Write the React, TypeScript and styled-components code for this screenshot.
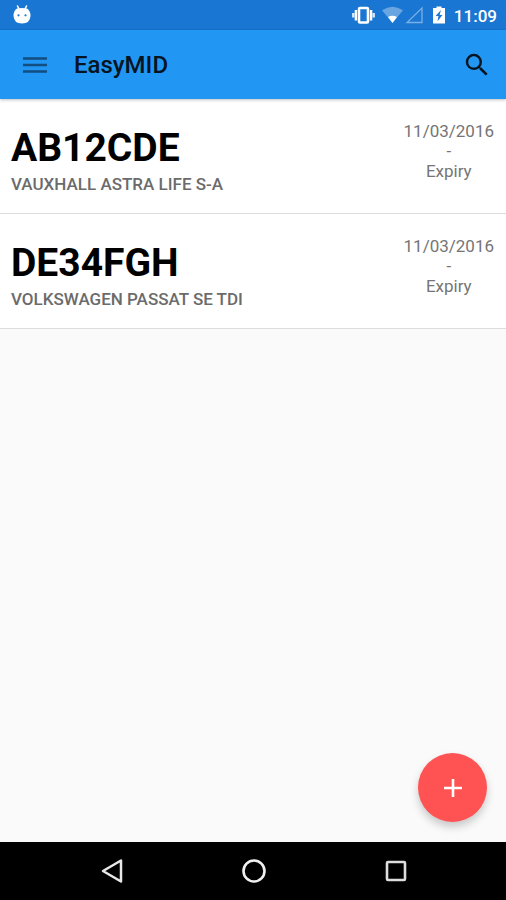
import React from "react";
import styled, { createGlobalStyle } from "styled-components";

const GlobalStyle = createGlobalStyle`
  *, *::before, *::after { box-sizing: border-box; }
  body { margin: 0; background: #fafafa; font-family: Roboto, sans-serif; }
  svg { display: block; }
`;

const Screen = styled.div`
  display: flex;
  flex-direction: column;
  min-height: 100vh;
  background: #fafafa;
`;

const StatusBar = styled.div`
  display: flex;
  align-items: center;
  justify-content: space-between;
  height: 30px;
  padding: 0 9px 0 12px;
  background: #1976d2;
  color: #fff;
`;

const StatusIcons = styled.div`
  display: flex;
  align-items: center;
`;

const Clock = styled.time`
  margin-left: 7px;
  padding-top: 2px;
  font-size: 17px;
  line-height: 20px;
  font-weight: 500;
`;

const AppBar = styled.header`
  position: relative;
  display: flex;
  align-items: center;
  height: 69px;
  padding: 0 11px 0 17px;
  background: #2196f3;
  box-shadow: 0 1px 3px rgba(0, 0, 0, 0.25);
`;

const Button = styled.button`
  display: grid;
  place-items: center;
  padding: 0;
  border: 0;
  cursor: pointer;
`;

const IconButton = styled(Button)<{ $tone: string }>`
  width: 36px;
  height: 36px;
  background: none;
  color: ${(p) => p.$tone};
`;

const Title = styled.h1`
  flex: 1;
  margin: 0 0 0 21px;
  font-size: 24px;
  line-height: 32px;
  font-weight: 500;
  color: #06141f;
`;

const VehicleList = styled.ul`
  margin: 0;
  padding: 0;
  list-style: none;
`;

const VehicleRow = styled.li`
  display: flex;
  justify-content: space-between;
  align-items: flex-start;
  padding: 22px 12px 18px 11px;
  background: #fff;
  border-bottom: 1px solid #dcdcdc;
`;

const Plate = styled.h2`
  margin: 0;
  padding-top: 2px;
  font-size: 39px;
  line-height: 50px;
  font-weight: 700;
  color: #000;
`;

const Model = styled.p`
  margin: 0;
  font-size: 17px;
  line-height: 22px;
  font-weight: 500;
  color: #6b6b6b;
`;

const Expiry = styled.div`
  display: flex;
  flex-direction: column;
  align-items: center;
  font-size: 17px;
  line-height: 20px;
  color: #757575;
`;

const Content = styled.main`
  flex: 1;
  display: flex;
  flex-direction: column;
  justify-content: space-between;
`;

const AddButton = styled(Button)`
  align-self: flex-end;
  width: 69px;
  height: 69px;
  margin: 20px 19px 20px;
  border-radius: 50%;
  background: #ff5252;
  color: #fff;
  box-shadow: 0 5px 8px rgba(0, 0, 0, 0.2);
`;

const NavBar = styled.nav`
  display: flex;
  justify-content: center;
  align-items: center;
  gap: 106px;
  height: 58px;
  padding-left: 2px;
  background: #000;
`;

const AndroidHead = () => (
  <svg width="20" height="22" viewBox="0 0 20 22" aria-hidden="true">
    <path d="M5.5 2l1.5 3M14.5 2l-1.5 3" stroke="#fff" strokeWidth="1.6" strokeLinecap="round" />
    <path d="M5 4.6Q10 3.4 15 4.6Q18.5 7 18.5 12Q18 19.5 10 19.5Q2 19.5 1.5 12Q1.5 7 5 4.6Z" fill="#fff" />
    <circle cx="6.5" cy="11.3" r="1.1" fill="#1976d2" />
    <circle cx="13.5" cy="11.3" r="1.1" fill="#1976d2" />
  </svg>
);

const SignalIcons = () => (
  <svg width="96" height="22" viewBox="0 0 96 22" aria-hidden="true">
    <rect x="8" y="4" width="9" height="14.5" rx="1" fill="none" stroke="#fff" strokeWidth="2.6" />
    <path d="M4.9 6v10.500M20.100 6v10.500" stroke="#fff" strokeWidth="2.4" />
    <path d="M2.300 9v4.500M22.700 9v4.500" stroke="#fff" strokeOpacity=".85" strokeWidth="2.4" />
    <path d="M31 6.2Q41.5-.8 52 6.2L41.5 19Z" fill="#fff" fillOpacity=".35" />
    <path d="M37 13Q41.5 10.5 46 13L41.5 19Z" fill="#fff" />
    <path d="M56 18.5H71V4Z" fill="none" stroke="#fff" strokeOpacity=".42" strokeWidth="1.3" />
    <path d="M85.5 2.5h5V4H94v15.5H82V4h3.5Z" fill="#fff" />
    <path d="M90 6l-5.4 6h2.9L86.5 17.3l5-6.2h-2.9Z" fill="#1976d2" />
  </svg>
);

const MenuIcon = () => (
  <svg width="24" height="18" viewBox="0 0 24 18" aria-hidden="true">
    <path d="M0 2.5h24M0 9h24M0 15.5h24" stroke="currentColor" strokeWidth="2.6" />
  </svg>
);

const SearchIcon = () => (
  <svg width="30" height="30" viewBox="0 0 24 24" aria-hidden="true">
    <path
      fill="currentColor"
      d="M15.5 14h-.79l-.28-.27A6.471 6.471 0 0 0 16 9.5 6.5 6.5 0 1 0 9.5 16c1.61 0 3.09-.59 4.23-1.57l.27.28v.79l5 4.99L20.49 19l-4.99-5zm-6 0C7.01 14 5 11.99 5 9.5S7.01 5 9.5 5 14 7.01 14 9.5 11.99 14 9.5 14z"
    />
  </svg>
);

const vehicles = [
  { plate: "AB12CDE", model: "VAUXHALL ASTRA LIFE S-A", expiry: "11/03/2016" },
  { plate: "DE34FGH", model: "VOLKSWAGEN PASSAT SE TDI", expiry: "11/03/2016" },
];

export default function App() {
  return (
    <Screen>
      <GlobalStyle />
      <StatusBar>
        <AndroidHead />
        <StatusIcons>
          <SignalIcons />
          <Clock>11:09</Clock>
        </StatusIcons>
      </StatusBar>
      <AppBar>
        <IconButton $tone="#124f80" aria-label="Open menu"><MenuIcon /></IconButton>
        <Title>EasyMID</Title>
        <IconButton $tone="#06141f" aria-label="Search"><SearchIcon /></IconButton>
      </AppBar>
      <Content>
        <VehicleList>
          {vehicles.map((v) => (
            <VehicleRow key={v.plate}>
              <div>
                <Plate>{v.plate}</Plate>
                <Model>{v.model}</Model>
              </div>
              <Expiry>
                <time>{v.expiry}</time>
                <span>-</span>
                <span>Expiry</span>
              </Expiry>
            </VehicleRow>
          ))}
        </VehicleList>
        <AddButton aria-label="Add vehicle">
          <svg width="18" height="18" viewBox="0 0 18 18" aria-hidden="true">
            <path d="M9 0v18M0 9h18" stroke="currentColor" strokeWidth="2.6" />
          </svg>
        </AddButton>
      </Content>
      <NavBar>
        <IconButton $tone="#e8e8e8" aria-label="Back">
          <svg width="24" height="26" viewBox="0 0 24 26" aria-hidden="true">
            <path d="M21 2.5v21L3 13Z" fill="none" stroke="currentColor" strokeWidth="2.5" strokeLinejoin="round" />
          </svg>
        </IconButton>
        <IconButton $tone="#f0f0f0" aria-label="Home">
          <svg width="26" height="26" viewBox="0 0 26 26" aria-hidden="true">
            <circle cx="13" cy="13" r="10.5" fill="none" stroke="currentColor" strokeWidth="2.6" />
          </svg>
        </IconButton>
        <IconButton $tone="#dedede" aria-label="Recent apps">
          <svg width="22" height="22" viewBox="0 0 22 22" aria-hidden="true">
            <rect x="2" y="2" width="18" height="18" rx="1" fill="none" stroke="currentColor" strokeWidth="2.6" />
          </svg>
        </IconButton>
      </NavBar>
    </Screen>
  );
}
